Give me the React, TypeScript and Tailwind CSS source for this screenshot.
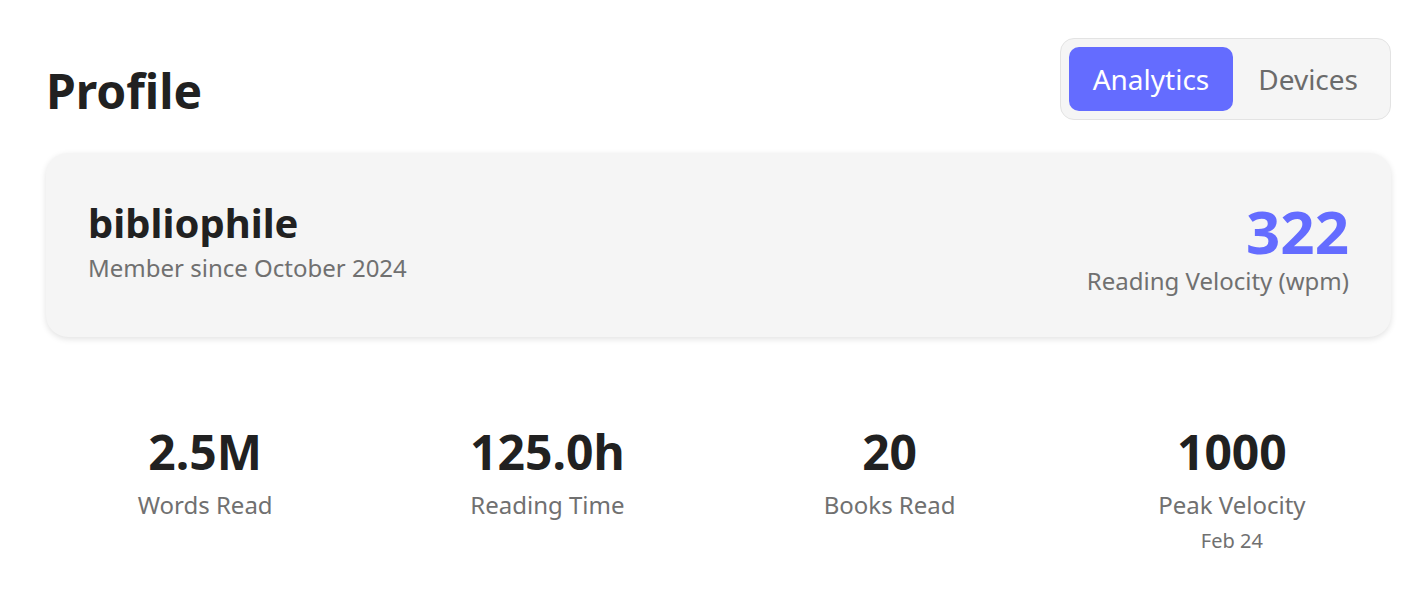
import React from 'react';

const stats = [
  { value: '2.5M', label: 'Words Read' },
  { value: '125.0h', label: 'Reading Time' },
  { value: '20', label: 'Books Read' },
  { value: '1000', label: 'Peak Velocity', sub: 'Feb 24' },
];

export default function App() {
  return (
    <div
      className="min-h-[610px] bg-white pl-[46px] pr-[37px] pt-[38px] text-[#212121]"
      style={{ fontFamily: '"Noto Sans", "Open Sans", sans-serif' }}
    >
      {/* header */}
      <div className="flex items-start justify-between">
        <h1 className="mt-[29px] text-[48px] font-bold leading-none">Profile</h1>
        <div className="flex h-[82px] items-center rounded-[14px] border border-[#e3e3e3] bg-[#f5f5f5] pl-[8px] pr-[7px]">
          <button className="h-[64px] rounded-[10px] bg-[#646cff] px-[24px] text-[28px] text-white">
            Analytics
          </button>
          <button className="h-[64px] rounded-[10px] px-[25px] text-[28px] text-[#6b6b6b]">
            Devices
          </button>
        </div>
      </div>

      {/* user card */}
      <div className="mt-[33px] flex h-[184px] items-center justify-between rounded-[22px] bg-[#f5f5f5] px-[42px] shadow-[0_2px_6px_rgba(0,0,0,0.12)]">
        <div className="mb-[8px] flex flex-col">
          <div className="text-[40px] font-bold leading-[50px]">bibliophile</div>
          <div className="mt-[4px] text-[24px] leading-[32px] text-[#707070]">Member since October 2024</div>
        </div>
        <div className="mt-[6px] flex flex-col items-end">
          <div className="text-[60px] font-bold leading-[66px] text-[#646cff]">322</div>
          <div className="text-[24px] leading-[34px] text-[#707070]">Reading Velocity (wpm)</div>
        </div>
      </div>

      {/* stats */}
      <div className="mt-[83px] grid grid-cols-4 gap-[24px]">
        {stats.map((s) => (
          <div key={s.label} className="flex flex-col items-center">
            <div className="text-[48px] font-bold leading-[64px]">{s.value}</div>
            <div className="mt-[4px] text-[24px] leading-[34px] text-[#707070]">{s.label}</div>
            {s.sub && <div className="mt-[6px] text-[20px] leading-[26px] text-[#707070]">{s.sub}</div>}
          </div>
        ))}
      </div>
    </div>
  );
}
